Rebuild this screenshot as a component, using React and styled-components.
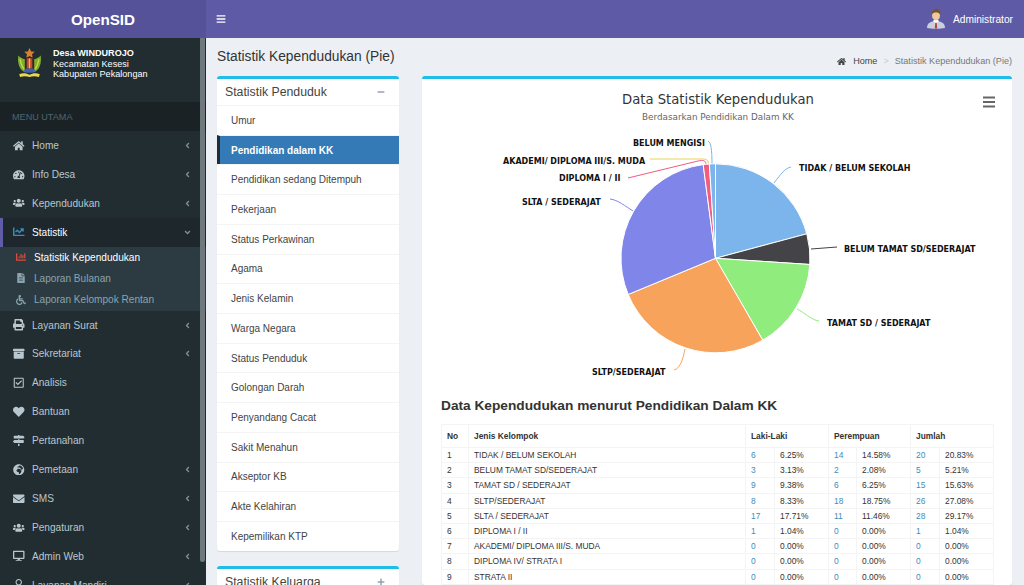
import React from "react";
import styled, { createGlobalStyle } from "styled-components";
import {
  FaHome, FaTachometerAlt, FaUsers, FaChartLine, FaChartBar, FaFileAlt, FaWheelchair,
  FaPrint, FaArchive, FaRegCheckSquare, FaHeart, FaMapSigns, FaGlobeAfrica, FaEnvelope,
  FaDesktop, FaRegUser, FaAngleLeft, FaAngleDown, FaBars, FaMinus, FaPlus,
} from "react-icons/fa";

const GlobalStyle = createGlobalStyle`
  html, body {
    margin: 0;
    height: 100%;
    overflow: hidden;
    background: #ecf0f5;
    font-family: "Liberation Sans", Arial, sans-serif;
  }
  * { box-sizing: border-box; }
`;

const Page = styled.div`
  display: flex;
  flex-direction: column;
  height: 585px;
  overflow: hidden;
`;

const TopBar = styled.header`
  display: flex;
  align-items: center;
  flex: 0 0 38px;
  background: #5f5aa6;
  color: #fff;
`;

const Brand = styled.div`
  width: 206px;
  height: 100%;
  display: flex;
  align-items: center;
  justify-content: center;
  background: #555299;
  font-size: 15.2px;
  font-weight: 700;
`;

const Toggle = styled.div`
  display: flex;
  margin-left: 10px;
  font-size: 10px;
`;

const UserMenu = styled.div`
  margin-left: auto;
  margin-right: 11px;
  display: flex;
  align-items: center;
  gap: 8px;
  font-size: 10.2px;
`;

const Main = styled.div`
  flex: 1;
  display: flex;
  min-height: 0;
`;

const Sidebar = styled.aside`
  position: relative;
  flex: 0 0 206px;
  background: #222d32;
  overflow: hidden;
`;

const ScrollThumb = styled.div`
  position: absolute;
  top: 0;
  right: 1px;
  width: 5px;
  height: 524px;
  background: #6f787c;
  border-radius: 0 0 3px 3px;
`;

const VillagePanel = styled.div`
  height: 64px;
  display: flex;
  gap: 11px;
  padding: 10px 0 0 17px;
  color: #fff;
  font-size: 9.1px;
  line-height: 10.5px;
  strong { display: block; font-weight: 700; }
`;

const MenuLabel = styled.div`
  height: 29px;
  padding-left: 12px;
  display: flex;
  align-items: center;
  background: #1a2226;
  color: #4f6670;
  font-size: 9.1px;
`;

const MenuRow = styled.div`
  height: 28.9px;
  display: flex;
  align-items: center;
  padding-left: ${(p) => (p.$active ? "10px" : "13px")};
  padding-right: 13px;
  font-size: 10.1px;
  color: ${(p) => (p.$active ? "#fff" : "#b8c7ce")};
  background: ${(p) => (p.$active ? "#1e282c" : "transparent")};
  border-left: ${(p) => (p.$active ? "3px solid #605ca8" : "none")};
`;

const MenuIcon = styled.span`
  width: 19px;
  display: flex;
  font-size: 11.5px;
  color: ${(p) => p.$color || "inherit"};
`;

const MenuArrow = styled.span`
  margin-left: auto;
  display: flex;
  font-size: 9px;
  margin-right: 1px;
  color: #7f8d94;
`;

const SubMenu = styled.div`
  background: #2c3b41;
  padding: 0 0 0.5px;
`;

const SubRow = styled.div`
  height: 21.2px;
  display: flex;
  align-items: center;
  padding-left: 16px;
  font-size: 10.1px;
  color: ${(p) => (p.$active ? "#fff" : "#8aa4af")};
`;

const SubIcon = styled.span`
  width: 18px;
  display: flex;
  font-size: 10px;
  color: ${(p) => p.$color || "inherit"};
`;

const Content = styled.main`
  flex: 1;
  min-width: 0;
  padding: 0 12px 0 11px;
  overflow: hidden;
`;

const ContentHeader = styled.div`
  height: 38px;
  display: flex;
  justify-content: space-between;
  color: #333;
`;

const PageTitle = styled.h1`
  margin: 10px 0 0;
  font-size: 13.77px;
  font-weight: 400;
  line-height: 18px;
`;

const Breadcrumb = styled.div`
  display: flex;
  align-items: center;
  height: 12px;
  margin-top: 17px;
  font-size: 9.1px;
  color: #444;
  svg { font-size: 9px; margin-right: 7px; }
  i { font-style: normal; color: #ccc; margin: 0 6px; }
  span { color: #777; }
`;

const Columns = styled.div`
  display: grid;
  grid-template-columns: 182px 590px;
  column-gap: 23px;
  align-items: start;
`;

const Box = styled.section`
  background: #fff;
  border-top: 3px solid #1fbde8;
  border-radius: 3px;
  box-shadow: 0 1px 1px rgba(0, 0, 0, 0.1);
  margin-bottom: 15px;
`;

const BoxHeader = styled.div`
  height: 26px;
  display: flex;
  align-items: center;
  justify-content: space-between;
  padding: 0 14px 0 8px;
  font-size: 12.3px;
  color: #444;
  svg { font-size: 8px; color: #97a0b3; }
`;

const NavItem = styled.div`
  height: 29.72px;
  display: flex;
  align-items: center;
  padding-left: ${(p) => (p.$active ? "11px" : "14px")};
  border-top: 1px solid #f4f4f4;
  border-left: ${(p) => (p.$active ? "3px solid #222d32" : "none")};
  font-size: 10px;
  font-weight: ${(p) => (p.$active ? 700 : 400)};
  color: ${(p) => (p.$active ? "#fff" : "#444")};
  background: ${(p) => (p.$active ? "#337ab7" : "transparent")};
`;

const ChartSvg = styled.svg`
  display: block;
  width: 590px;
  height: 318px;
  font-family: "DejaVu Sans", Verdana, sans-serif;
`;

const TableArea = styled.div`
  padding: 0 19px;
`;

const TableTitle = styled.h3`
  margin: 0 0 10px;
  font-size: 13.7px;
  line-height: 17px;
  font-weight: 700;
  color: #333;
`;

const DataTable = styled.table`
  width: 552px;
  table-layout: fixed;
  border-collapse: collapse;
  font-size: 8.4px;
  color: #333;
  th, td {
    border: 1px solid #f4f4f4;
    padding: 0 0 0 5px;
    text-align: left;
    white-space: nowrap;
    overflow: hidden;
  }
  th { height: 23px; font-weight: 700; }
  td { height: 15.2px; }
`;

const CountCell = styled.td`
  color: #3c8dbc;
`;

const cx = 715.5;
const cy = 258.3;
const r = 94.5;

const slices = [
  { pct: 20.83, color: "#7cb5ec" },
  { pct: 5.21, color: "#434348" },
  { pct: 15.63, color: "#90ed7d" },
  { pct: 27.08, color: "#f7a35c" },
  { pct: 29.17, color: "#8085e9" },
  { pct: 1.04, color: "#f15c80" },
  { pct: 1.04, color: "#7cb5ec" },
];

const point = (pct) => {
  const a = (pct / 100) * 2 * Math.PI;
  return [cx + r * Math.sin(a), cy - r * Math.cos(a)];
};

const leaders = [
  { d: "M791 167C785 168 781 174 774 183", color: "#7cb5ec" },
  { d: "M811 249L837 247", color: "#434348" },
  { d: "M797 309C804 312 811 320 819 321", color: "#90ed7d" },
  { d: "M685 349C683 358 681 368 674 370", color: "#f7a35c" },
  { d: "M633 211C625 206 618 200 610 199", color: "#8085e9" },
  { d: "M628 178L698 161C703 160 706 160 706 165", color: "#f15c80" },
  { d: "M650 159L702 159C707 159 708 160 709 165", color: "#e4d354" },
  { d: "M708 141C711 142 712 150 712 164", color: "#7cb5ec" },
];

const chartLabels = [
  { text: "TIDAK / BELUM SEKOLAH", x: 799, y: 171 },
  { text: "BELUM TAMAT SD/SEDERAJAT", x: 844, y: 252 },
  { text: "TAMAT SD / SEDERAJAT", x: 827, y: 326 },
  { text: "SLTP/SEDERAJAT", x: 592, y: 375 },
  { text: "SLTA / SEDERAJAT", x: 522, y: 205 },
  { text: "DIPLOMA I / II", x: 559, y: 181 },
  { text: "AKADEMI/ DIPLOMA III/S. MUDA", x: 503, y: 164 },
  { text: "BELUM MENGISI", x: 633, y: 146 },
];

function PieChart() {
  let used = 0;
  return (
    <ChartSvg viewBox="422 79 590 318">
      <text x="718" y="104" textAnchor="middle" fontSize="13.2" fill="#333">Data Statistik Kependudukan</text>
      <text x="718" y="120" textAnchor="middle" fontSize="8.8" fill="#666">Berdasarkan Pendidikan Dalam KK</text>
      <g stroke="#666" strokeWidth="2">
        <path d="M983 97.5h12M983 102h12M983 106.500h12" />
      </g>
      {leaders.map((l) => (
        <path key={l.d} d={l.d} fill="none" stroke={l.color} strokeWidth="1" />
      ))}
      {slices.map((s) => {
        const [x1, y1] = point(used);
        used += s.pct;
        const [x2, y2] = point(used);
        return (
          <path
            key={used}
            d={`M${cx} ${cy}L${x1} ${y1}A${r} ${r} 0 0 1 ${x2} ${y2}Z`}
            fill={s.color}
            stroke="#fff"
            strokeWidth="1"
          />
        );
      })}
      {chartLabels.map((l) => (
        <text key={l.text} x={l.x} y={l.y} fontSize="8" fontWeight="700" fill="#111">{l.text}</text>
      ))}
    </ChartSvg>
  );
}

function VillageLogo() {
  return (
    <svg width="25" height="30" viewBox="0 0 26 32" style={{ flex: "none" }}>
      <path d="M1 8C0 16 2 24 9 26L9 12C6 12 3 10 1 8Z" fill="#7fae2e" />
      <path d="M25 8C26 16 24 24 17 26L17 12C20 12 23 10 25 8Z" fill="#7fae2e" />
      <path d="M3 12C4 18 6 22 9 24" fill="none" stroke="#c8d84a" strokeWidth="1.5" />
      <path d="M23 12C22 18 20 22 17 24" fill="none" stroke="#c8d84a" strokeWidth="1.500" />
      <path d="M13 0l1.700 3.700 3.900.400-2.900 2.600.800 3.900-3.500-2-3.500 2 .800-3.900-2.900-2.600 3.900-.400z" fill="#d9822b" />
      <rect x="8" y="10" width="10" height="13" fill="#2d2a26" />
      <rect x="10" y="11" width="6" height="11" fill="#c9472c" />
      <rect x="12.300" y="11" width="1.400" height="11" fill="#e8c23a" />
      <ellipse cx="13" cy="24" rx="6" ry="2.500" fill="#3f5fa8" />
      <path d="M2 28C6 26 10 27 13 28.500C16 27 20 26 24 28L23 31C19 29.500 16 30 13 31C10 30 7 29.500 3 31Z" fill="#e9d84f" />
    </svg>
  );
}

function UserAvatar() {
  return (
    <svg width="18" height="20" viewBox="0 0 18 20">
      <path d="M0 19C0 14 4 12 9 12C14 12 18 14 18 19C14 20 4 20 0 19Z" fill="#c9cfdc" />
      <path d="M6 12L9 15L12 12L11 11H7Z" fill="#fff" />
      <path d="M8.200 14L9 13.500L9.800 14L10.200 19.500H7.800Z" fill="#b5473c" />
      <ellipse cx="9" cy="6.500" rx="4" ry="5" fill="#edc9a0" />
      <path d="M4.800 6C4 2 7 0 9.500 0C12.500 0 14 2.500 13.200 6C12.500 4 11 3.500 9 3.500C7 3.500 5.500 4 4.800 6Z" fill="#7a5426" />
    </svg>
  );
}

const topMenu = [
  { label: "Home", icon: <FaHome />, arrow: true },
  { label: "Info Desa", icon: <FaTachometerAlt />, arrow: true },
  { label: "Kependudukan", icon: <FaUsers />, arrow: true },
];

const subMenu = [
  { label: "Statistik Kependudukan", icon: <FaChartBar />, color: "#dd4b39", active: true },
  { label: "Laporan Bulanan", icon: <FaFileAlt /> },
  { label: "Laporan Kelompok Rentan", icon: <FaWheelchair /> },
];

const bottomMenu = [
  { label: "Layanan Surat", icon: <FaPrint />, arrow: true },
  { label: "Sekretariat", icon: <FaArchive />, arrow: true },
  { label: "Analisis", icon: <FaRegCheckSquare /> },
  { label: "Bantuan", icon: <FaHeart /> },
  { label: "Pertanahan", icon: <FaMapSigns /> },
  { label: "Pemetaan", icon: <FaGlobeAfrica />, arrow: true },
  { label: "SMS", icon: <FaEnvelope />, arrow: true },
  { label: "Pengaturan", icon: <FaUsers />, arrow: true },
  { label: "Admin Web", icon: <FaDesktop />, arrow: true },
  { label: "Layanan Mandiri", icon: <FaRegUser />, arrow: true },
];

const navItems = [
  "Umur", "Pendidikan dalam KK", "Pendidikan sedang Ditempuh", "Pekerjaan", "Status Perkawinan",
  "Agama", "Jenis Kelamin", "Warga Negara", "Status Penduduk", "Golongan Darah",
  "Penyandang Cacat", "Sakit Menahun", "Akseptor KB", "Akte Kelahiran", "Kepemilikan KTP",
];

const rows = [
  ["TIDAK / BELUM SEKOLAH", 6, "6.25%", 14, "14.58%", 20, "20.83%"],
  ["BELUM TAMAT SD/SEDERAJAT", 3, "3.13%", 2, "2.08%", 5, "5.21%"],
  ["TAMAT SD / SEDERAJAT", 9, "9.38%", 6, "6.25%", 15, "15.63%"],
  ["SLTP/SEDERAJAT", 8, "8.33%", 18, "18.75%", 26, "27.08%"],
  ["SLTA / SEDERAJAT", 17, "17.71%", 11, "11.46%", 28, "29.17%"],
  ["DIPLOMA I / II", 1, "1.04%", 0, "0.00%", 1, "1.04%"],
  ["AKADEMI/ DIPLOMA III/S. MUDA", 0, "0.00%", 0, "0.00%", 0, "0.00%"],
  ["DIPLOMA IV/ STRATA I", 0, "0.00%", 0, "0.00%", 0, "0.00%"],
  ["STRATA II", 0, "0.00%", 0, "0.00%", 0, "0.00%"],
];

function SideItem({ item }) {
  return (
    <MenuRow>
      <MenuIcon>{item.icon}</MenuIcon>
      {item.label}
      {item.arrow && <MenuArrow><FaAngleLeft /></MenuArrow>}
    </MenuRow>
  );
}

export default function App() {
  return (
    <Page>
      <GlobalStyle />
      <TopBar>
        <Brand>OpenSID</Brand>
        <Toggle><FaBars /></Toggle>
        <UserMenu>
          <UserAvatar />
          Administrator
        </UserMenu>
      </TopBar>
      <Main>
        <Sidebar>
          <ScrollThumb />
          <VillagePanel>
            <VillageLogo />
            <div>
              <strong>Desa WINDUROJO</strong>
              Kecamatan Kesesi<br />
              Kabupaten Pekalongan
            </div>
          </VillagePanel>
          <MenuLabel>MENU UTAMA</MenuLabel>
          {topMenu.map((item) => <SideItem key={item.label} item={item} />)}
          <MenuRow $active>
            <MenuIcon $color="#3c8dbc"><FaChartLine /></MenuIcon>
            Statistik
            <MenuArrow><FaAngleDown /></MenuArrow>
          </MenuRow>
          <SubMenu>
            {subMenu.map((item) => (
              <SubRow key={item.label} $active={item.active}>
                <SubIcon $color={item.color}>{item.icon}</SubIcon>
                {item.label}
              </SubRow>
            ))}
          </SubMenu>
          {bottomMenu.map((item) => <SideItem key={item.label} item={item} />)}
        </Sidebar>
        <Content>
          <ContentHeader>
            <PageTitle>Statistik Kependudukan (Pie)</PageTitle>
            <Breadcrumb>
              <FaHome />
              Home
              <i>&gt;</i>
              <span>Statistik Kependudukan (Pie)</span>
            </Breadcrumb>
          </ContentHeader>
          <Columns>
            <div>
              <Box>
                <BoxHeader>
                  Statistik Penduduk
                  <FaMinus />
                </BoxHeader>
                {navItems.map((label) => (
                  <NavItem key={label} $active={label === "Pendidikan dalam KK"}>{label}</NavItem>
                ))}
              </Box>
              <Box>
                <BoxHeader>
                  Statistik Keluarga
                  <FaPlus />
                </BoxHeader>
              </Box>
            </div>
            <Box>
              <PieChart />
              <TableArea>
                <TableTitle>Data Kependudukan menurut Pendidikan Dalam KK</TableTitle>
                <DataTable>
                  <colgroup>
                    <col style={{ width: 27 }} />
                    <col style={{ width: 277 }} />
                    <col style={{ width: 29 }} />
                    <col style={{ width: 54 }} />
                    <col style={{ width: 28 }} />
                    <col style={{ width: 54 }} />
                    <col style={{ width: 29 }} />
                    <col style={{ width: 54 }} />
                  </colgroup>
                  <thead>
                    <tr>
                      <th>No</th>
                      <th>Jenis Kelompok</th>
                      <th colSpan="2">Laki-Laki</th>
                      <th colSpan="2">Perempuan</th>
                      <th colSpan="2">Jumlah</th>
                    </tr>
                  </thead>
                  <tbody>
                    {rows.map((row, i) => (
                      <tr key={row[0]}>
                        <td>{i + 1}</td>
                        <td>{row[0]}</td>
                        <CountCell>{row[1]}</CountCell>
                        <td>{row[2]}</td>
                        <CountCell>{row[3]}</CountCell>
                        <td>{row[4]}</td>
                        <CountCell>{row[5]}</CountCell>
                        <td>{row[6]}</td>
                      </tr>
                    ))}
                  </tbody>
                </DataTable>
              </TableArea>
            </Box>
          </Columns>
        </Content>
      </Main>
    </Page>
  );
}
